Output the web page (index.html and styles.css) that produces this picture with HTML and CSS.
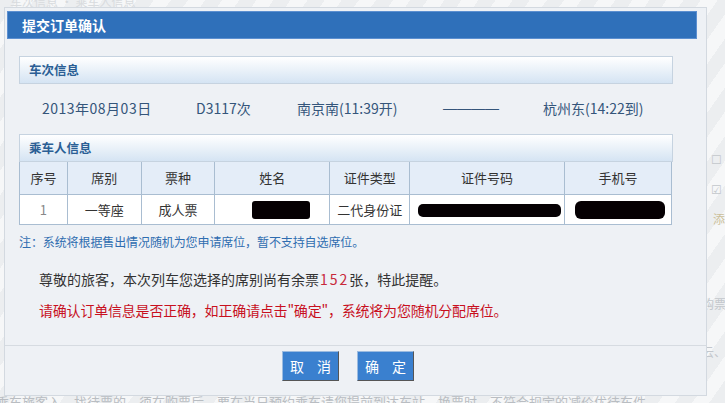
FILE: index.html
```html
<!DOCTYPE html>
<html lang="zh-CN">
<head>
    <meta charset="UTF-8">
    <title>提交订单确认</title>
    <link rel="stylesheet" href="styles.css">
</head>
<body>
    <div class="page">
        <div class="bg-top">车次信息 · 乘车人信息</div>
        <div class="bg-side">
            <span class="bg-a">☐ 王</span>
            <span class="bg-b">☑ 何</span>
            <span class="bg-c">添</span>
            <span class="bg-d">购票</span>
            <span class="bg-e">云、拼</span>
        </div>
        <div class="bg-bottom">乘车旅客入，找待票的，须在购票后，要在当日预约乘车请您提前到达车站，换票时，不符合规定的减价优待车件</div>
    </div>

    <div class="dialog">
        <div class="dialog-title">提交订单确认</div>
        <div class="dialog-body">
            <div class="section-head">车次信息</div>
            <div class="train">
                <span class="t-date">2013年08月03日</span>
                <span class="t-no">D3117次</span>
                <span class="t-from">南京南(11:39开)</span>
                <span class="t-line">————</span>
                <span class="t-to">杭州东(14:22到)</span>
            </div>

            <div class="section-head">乘车人信息</div>
            <table class="passengers">
                <tr>
                    <th class="c1">序号</th>
                    <th class="c2">席别</th>
                    <th class="c3">票种</th>
                    <th class="c4">姓名</th>
                    <th class="c5">证件类型</th>
                    <th class="c6">证件号码</th>
                    <th class="c7">手机号</th>
                </tr>
                <tr>
                    <td class="num">1</td>
                    <td>一等座</td>
                    <td>成人票</td>
                    <td><span class="mask mask-name"></span></td>
                    <td>二代身份证</td>
                    <td><span class="mask mask-id"></span></td>
                    <td><span class="mask mask-phone"></span></td>
                </tr>
            </table>
            <p class="note">注：系统将根据售出情况随机为您申请席位，暂不支持自选席位。</p>

            <p class="msg">尊敬的旅客，本次列车您选择的席别尚有余票<span class="count">152</span>张，特此提醒。</p>
            <p class="msg warn">请确认订单信息是否正确，如正确请点击"确定"，系统将为您随机分配席位。</p>
        </div>
        <div class="dialog-foot">
            <button class="btn">取 消</button>
            <button class="btn">确 定</button>
        </div>
    </div>
</body>
</html>
```

FILE: styles.css
```css
* {
    box-sizing: border-box;
}
body {
    margin: 0;
    width: 725px;
    height: 403px;
    overflow: hidden;
    font-family: "Noto Sans CJK SC", "Liberation Sans", sans-serif;
    background-color: #eef0f2;
    position: relative;
}
.page {
    position: absolute;
    inset: 0;
    overflow: hidden;
    background: repeating-linear-gradient(125deg, #eceef0 0, #eceef0 14px, #f6f7f8 14px, #f6f7f8 28px);
    color: #c9cdd2;
    font-size: 12px;
}
.bg-top {
    position: absolute;
    left: 10px;
    top: -4px;
    line-height: 12px;
    color: #d8dbde;
}
.bg-side span {
    position: absolute;
    white-space: nowrap;
    color: #c3c7cc;
    font-size: 12px;
}
.bg-a { left: 711px; top: 150px; }
.bg-b { left: 711px; top: 180px; }
.bg-c { left: 713px; top: 210px; color: #cbbf9a !important; }
.bg-d { left: 702px; top: 295px; }
.bg-e { left: 702px; top: 343px; }
.bg-bottom {
    position: absolute;
    left: -4px;
    top: 394px;
    width: 740px;
    overflow: hidden;
    white-space: nowrap;
    font-size: 13px;
    line-height: 16px;
    color: #b9bdc2;
}
.dialog {
    position: absolute;
    left: 4px;
    top: 7px;
    width: 703px;
    height: 389px;
    background-color: #eef1f5;
    border: 1px solid #d3d9e0;
    display: flex;
    flex-direction: column;
}
.dialog-title {
    margin: 3px 9px 0 2px;
    height: 28px;
    background-color: #2f70ba;
    border: 1px solid #5c8fd0;
    color: #fff;
    font-size: 14px;
    font-weight: bold;
    line-height: 26px;
    padding-left: 14px;
}
.dialog-body {
    padding: 17px 33px 0 14px;
    flex: 1;
}
.section-head {
    height: 28px;
    border: 1px solid #c6d3e0;
    background: linear-gradient(#ffffff, #d5e4f3);
    color: #2b5f95;
    font-size: 12.5px;
    font-weight: bold;
    line-height: 26px;
    padding-left: 9px;
}
.train {
    display: flex;
    height: 50px;
    align-items: center;
    padding-left: 23px;
    padding-bottom: 2px;
    color: #34557a;
    font-size: 14px;
    white-space: nowrap;
}
.t-date { width: 154px; letter-spacing: 0.5px; }
.t-no { width: 101px; }
.t-from { width: 146px; }
.t-line { width: 100px; font-family: "Liberation Sans", sans-serif; }
.passengers {
    width: 653px;
    border-collapse: collapse;
    font-size: 13px;
    color: #333;
    text-align: center;
}
.passengers th,
.passengers td {
    border: 1px solid #a9bdd1;
    padding: 0;
    font-weight: normal;
}
.passengers th {
    height: 32px;
    background-color: #e4edf8;
    border-top: none;
}
.passengers td {
    height: 30px;
    background-color: #fff;
}
.c1 { width: 48px; }
.c2 { width: 74px; }
.c3 { width: 74px; }
.c4 { width: 115px; }
.c5 { width: 80px; }
.c6 { width: 155px; }
.c7 { width: 107px; }
.num {
    color: #888;
}
.mask {
    display: inline-block;
    background-color: #050003;
    vertical-align: middle;
    border-radius: 3px;
}
.mask-name { width: 58px; height: 18px; margin-left: 18px; }
.mask-id { width: 143px; height: 13px; margin-left: 4px; border-radius: 5px; }
.mask-phone { width: 90px; height: 18px; margin-left: 3px; border-radius: 6px; }
.note {
    margin: 8px 0 0;
    font-size: 12px;
    letter-spacing: -0.1px;
    color: #2f6db0;
}
.msg {
    margin: 19px 0 0 20px;
    font-size: 14px;
    color: #333;
}
.msg + .msg {
    margin-top: 11px;
}
.count {
    color: #c8283a;
    letter-spacing: 2px;
    padding-left: 1px;
}
.warn {
    color: #c8101e;
    letter-spacing: -0.2px;
}
.dialog-foot {
    height: 50px;
    border-top: 1px solid #d6dbe1;
    display: flex;
    justify-content: center;
    align-items: flex-start;
    gap: 18px;
    padding: 5px 15px 0 0;
}
.btn {
    width: 57px;
    height: 30px;
    background-color: #3a80cf;
    border: 1px solid;
    border-color: #9bbbe0 #555 #555 #9bbbe0;
    color: #fff;
    font-family: inherit;
    font-size: 14px;
    line-height: 26px;
    white-space: nowrap;
    letter-spacing: 5px;
    padding: 0 0 0 5px;
}
```
